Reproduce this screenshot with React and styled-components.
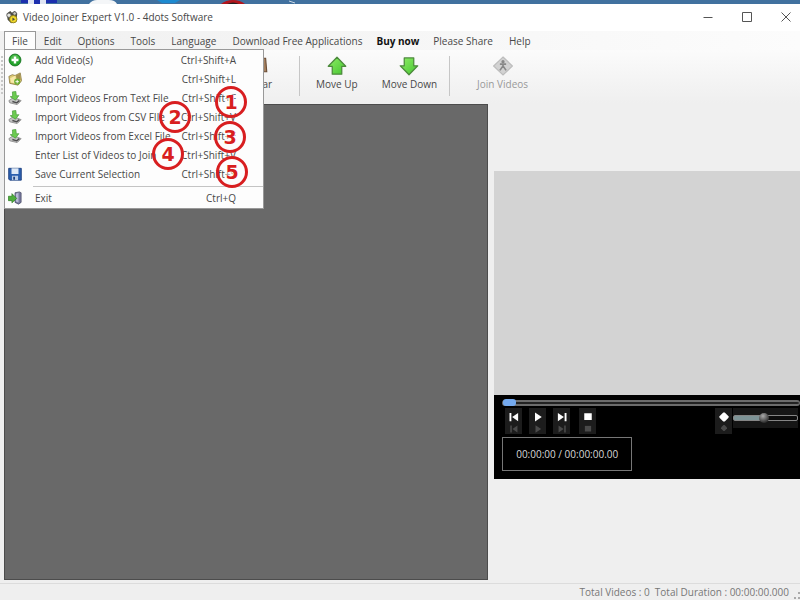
import React, { useState } from 'react';
import styled, { createGlobalStyle, css } from 'styled-components';

const MENUS = ['File', 'Edit', 'Options', 'Tools', 'Language', 'Download Free Applications', 'Buy now', 'Please Share', 'Help'];

const FILE_ITEMS = [
  { label: 'Add Video(s)', keys: 'Ctrl+Shift+A', icon: 'add' },
  { label: 'Add Folder', keys: 'Ctrl+Shift+L', icon: 'folder' },
  { label: 'Import Videos From Text File', keys: 'Ctrl+Shift+F', icon: 'import' },
  { label: 'Import Videos from CSV FIle', keys: 'Ctrl+Shift+V', icon: 'import' },
  { label: 'Import Videos from Excel File', keys: 'Ctrl+Shift+E', icon: 'import' },
  { label: 'Enter List of Videos to Join', keys: 'Ctrl+Shift+V' },
  { label: 'Save Current Selection', keys: 'Ctrl+Shift+S', icon: 'save' },
];

// callout centres, measured from the corner of the file menu
const CALLOUTS = [
  { n: 1, x: 226, y: 52 },
  { n: 2, x: 170, y: 67 },
  { n: 3, x: 225, y: 87 },
  { n: 4, x: 163, y: 104 },
  { n: 5, x: 227, y: 122 },
];

const icons = {
  add: (
    <>
      <circle cx="8" cy="8" r="6.8" fill="#23a32c" stroke="#12701b" />
      <path d="M3 7a5 5 0 0 1 10 0z" fill="#6ccb62" opacity=".6" />
      <path d="M8 4v8M4 8h8" stroke="#fff" strokeWidth="2.8" />
    </>
  ),
  folder: (
    <>
      <path d="M1 5l4-2 3 1 6-3 1.500 9-4 5-9.500-2z" fill="#dcc871" stroke="#7d6c34" strokeWidth=".8" />
      <path d="M2.500 7l6-3 1 9-6-1z" fill="#f7e9a9" />
      <path d="M9 4l4.500-2 1 7-4 2z" fill="#a3924c" />
      <circle cx="10.500" cy="11" r="3.500" fill="#6fae35" />
      <path d="M10.500 9v4M8.500 11h4" stroke="#fff" />
    </>
  ),
  import: (
    <>
      <path d="M1 11l5-3.500L15 11l-4.500 4.500L2 13.500z" fill="#c2c2c2" stroke="#777" strokeWidth=".8" />
      <path d="M5 12l5 1.500 3-2.500" fill="none" stroke="#4d4d4d" strokeWidth="1.500" />
      <path d="M5 1l4-.5.500 5 3-.2L8.500 10.500 2.500 6.500l2.800-.4z" fill="#6ccb50" stroke="#3f9430" strokeWidth=".7" />
    </>
  ),
  save: (
    <>
      <path d="M.8 1.500h14.400v13.500H2L.8 13.800z" fill="#2b5fae" stroke="#1d3f7e" />
      <path d="M4 1.500h8v6.500H4z" fill="#dfe9f6" />
      <path d="M4.500 10h7v5h-7z" fill="#b8cbe6" />
      <path d="M6 11h2v3.500H6z" fill="#1d3f7e" />
    </>
  ),
  exit: (
    <>
      <path d="M8 2l5-1 2 1v11l-3 2-4-2z" fill="#77799e" stroke="#44465f" strokeWidth=".8" />
      <path d="M9 3l3-1v11l-3-1z" fill="#b9bbd6" />
      <path d="M.5 6h4V3L10 8.500 4.500 13.500V11h-4z" fill="#4fae3c" stroke="#2c7a22" strokeWidth=".8" />
    </>
  ),
  app: (
    <>
      <path d="M2 4l4-3 2 2 3-2 3 3-1 9-6 2-4-4z" fill="#4a4a42" />
      <circle cx="4.500" cy="6" r="2.500" fill="#e6e6e0" stroke="#555" />
      <circle cx="11" cy="4" r="2" fill="#c9c9bd" stroke="#555" />
      <circle cx="9.500" cy="10.500" r="4.200" fill="#f0d92c" stroke="#8c7c16" />
      <path d="M8.500 8.500l3 2-3 2z" fill="#4a4a42" />
    </>
  ),
  clear: (
    <>
      <path d="M3 2h10l1 12H2z" fill="#a4805f" stroke="#6b4d36" />
      <path d="M5 4v8M8 4v8" stroke="#d3b494" />
    </>
  ),
  up: <path d="M8 1L15 8.200H11.800v6.300H4.200V8.200H1z" fill="url(#green)" stroke="#4c8a3c" strokeWidth="1" strokeLinejoin="round" />,
  down: <path d="M8 15L1 7.800h3.200V1.500h7.600v6.300H15z" fill="url(#green)" stroke="#4c8a3c" strokeWidth="1" strokeLinejoin="round" />,
  join: (
    <>
      <path d="M8 .8L15.500 8 8 15.200.5 8z" fill="#d2d2d2" stroke="#bdbdbd" />
      <circle cx="8" cy="4.500" r="1.300" fill="#888" />
      <path d="M5.500 6.500h5M8 6v2.500M8 8l-2.500 3.500M8 8l2.500 3.500" fill="none" stroke="#888" strokeWidth="1.300" />
    </>
  ),
  prev: <path d="M2 2.500h2.500v11H2zM13.500 2.500v11L5.500 8z" fill="#fff" />,
  play: <path d="M4 2l9 6-9 6z" fill="#fff" />,
  next: <path d="M11.500 2.500H14v11h-2.500zM2.500 2.500v11l8-5.500z" fill="#fff" />,
  stop: <path d="M3 3h10v9H3z" fill="#fff" />,
  volume: <path d="M7 2h2l5 5v2l-5 5H7L2 9V7z" fill="#fff" />,
  minimize: <path d="M3.500 8.500h9" stroke="#555" />,
  maximize: <path d="M3.500 3.500h9v9h-9z" fill="none" stroke="#555" />,
  close: <path d="M3.500 3.500l9 9M12.500 3.500l-9 9" stroke="#555" />,
};

const Icon = ({ name, size = 16 }) => (
  <svg width={size} height={size} viewBox="0 0 16 16" aria-hidden="true">
    <defs>
      <linearGradient id="green" x1="0" y1="0" x2="1" y2="1">
        <stop offset="0" stopColor="#8fee66" />
        <stop offset="1" stopColor="#45c430" />
      </linearGradient>
    </defs>
    {icons[name]}
  </svg>
);

const App = () => {
  const [position, setPosition] = useState(0);
  const [volume, setVolume] = useState(48);

  return (
    <Page>
      <GlobalStyle />
      <Desktop viewBox="0 0 800 4" preserveAspectRatio="xMinYMin slice" aria-hidden="true">
        <path d="M0 0h800v4H0z" fill="#41719f" />
        <path d="M21 0h7v3h-7zM34 0h6v4h-6zM46 0h11v3H46z" fill="#1c2fae" />
        <path d="M28 0h6v4h-6zM40 0h6v4h-6z" fill="#dfe4f2" />
        <path d="M89 4q3-4 8-4h12q6 0 8 4z" fill="#f4f6f8" />
        <path d="M157 0h23l-5 3h-13z" fill="#1d8ad0" />
        <path d="M221 4q5-4 12-4t12 4z" fill="#b3151c" />
        <path d="M227 4q6-3 12 0z" fill="#222" />
        <path d="M289 1l6 2" stroke="#c9d6e4" />
      </Desktop>
      <Window>
        <TitleBar>
          <Icon name="app" size={14} />
          <Title>Video Joiner Expert V1.0 - 4dots Software</Title>
          <WindowButton aria-label="Minimize"><Icon name="minimize" /></WindowButton>
          <WindowButton aria-label="Maximize"><Icon name="maximize" /></WindowButton>
          <WindowButton aria-label="Close"><Icon name="close" /></WindowButton>
        </TitleBar>

        <MenuBar>
          {MENUS.map((menu) => (
            <MenuButton key={menu} $open={menu === 'File'} $bold={menu === 'Buy now'}>{menu}</MenuButton>
          ))}
          <DropDown>
            {FILE_ITEMS.map((item) => (
              <MenuItem key={item.label}>
                <IconSlot>{item.icon && <Icon name={item.icon} size={14} />}</IconSlot>
                <span>{item.label}</span>
                <Keys>{item.keys}</Keys>
              </MenuItem>
            ))}
            <MenuRule />
            <MenuItem>
              <IconSlot><Icon name="exit" size={14} /></IconSlot>
              <span>Exit</span>
              <Keys>Ctrl+Q</Keys>
            </MenuItem>
            {CALLOUTS.map(({ n, x, y }) => (
              <Callout key={n} style={{ left: x, top: y }}>{n}</Callout>
            ))}
          </DropDown>
        </MenuBar>

        <ToolBar>
          <Grip />
          <ToolButton><Icon name="clear" size={18} />Clear</ToolButton>
          <ToolRule />
          <ToolButton><Icon name="up" size={20} />Move Up</ToolButton>
          <ToolButton><Icon name="down" size={20} />Move Down</ToolButton>
          <ToolRule />
          <ToolButton $wide disabled><Icon name="join" size={20} />Join Videos</ToolButton>
        </ToolBar>

        <Main>
          <FileList />
          <Side>
            <Preview />
            <Player>
              <Seek
                type="range"
                aria-label="Position"
                value={position}
                onChange={(e) => setPosition(Number(e.target.value))}
              />
              <Controls>
                {['prev', 'play', 'next', 'stop'].map((name) => (
                  <PlayerButton key={name} aria-label={name}>
                    <Icon name={name} size={12} />
                    <Reflection><Icon name={name} size={10} /></Reflection>
                  </PlayerButton>
                ))}
                <VolumeGroup>
                  <PlayerButton aria-label="Mute">
                    <Icon name="volume" size={12} />
                    <Reflection><Icon name="volume" size={8} /></Reflection>
                  </PlayerButton>
                  <Volume
                    type="range"
                    aria-label="Volume"
                    value={volume}
                    onChange={(e) => setVolume(Number(e.target.value))}
                    style={{ '--level': `${volume}%` }}
                  />
                </VolumeGroup>
              </Controls>
              <Timer>00:00:00 / 00:00:00.00</Timer>
            </Player>
          </Side>
        </Main>

        <StatusBar>
          <span>Total Videos : 0</span>
          <span>Total Duration : 00:00:00.000</span>
          <SizeGrip width="6" height="8" aria-hidden="true">
            <path d="M4 0h2v2H4zM0 5h2v2H0zM4 5h2v2H4z" fill="#aaa" />
          </SizeGrip>
        </StatusBar>
      </Window>
    </Page>
  );
}

export default App;

const GlobalStyle = createGlobalStyle`
  * {
    box-sizing: border-box;
  }
  body {
    margin: 0;
    font-family: "Open Sans", "Noto Sans", sans-serif;
    font-size: 10px;
    line-height: 14px;
    color: #484848;
  }
  button {
    margin: 0;
    padding: 0;
    border: 0;
    background: none;
    font: inherit;
    color: inherit;
  }
  svg {
    display: block;
    flex: none;
  }
`;

const Page = styled.div`
  min-height: 100vh;
  display: flex;
  flex-direction: column;
  overflow: hidden;
`;

const Desktop = styled.svg`
  width: 100%;
  height: 4px;
`;

const Window = styled.div`
  flex: 1;
  display: flex;
  flex-direction: column;
  background-color: #efefef;
`;

const TitleBar = styled.header`
  display: flex;
  align-items: center;
  height: 27px;
  padding: 0 0 2px 5px;
  background-color: #fff;
`;

const Title = styled.h1`
  flex: 1;
  margin: 0 0 0 4px;
  font-size: 10px;
  font-weight: normal;
`;

const WindowButton = styled.button`
  display: flex;
  justify-content: center;
  width: 39px;
  &:last-child {
    width: 34px;
    padding-left: 6px;
  }
`;

const MenuBar = styled.nav`
  position: relative;
  display: flex;
  height: 19px;
  padding-left: 4px;
  background: linear-gradient(to right, #f0f0f0, #fcfcfc);
`;

const MenuButton = styled.button`
  padding: 0 8px;
  white-space: nowrap;
  ${(props) => props.$bold && css`
    padding: 0 6px;
    font-weight: bold;
    color: #111;
  `}
  ${(props) => props.$open && css`
    padding: 0 7px;
    border: 1px solid #999;
    border-bottom: 0;
    background-color: #fdfdfd;
  `}
`;

const DropDown = styled.div`
  position: absolute;
  z-index: 1;
  top: 18px;
  left: 4px;
  width: 260px;
  padding-bottom: 1px;
  border: 1px solid #999;
  background-color: #fdfdfd;
`;

const MenuItem = styled.button`
  display: flex;
  align-items: center;
  width: 100%;
  height: 19px;
  padding-right: 27px;
  white-space: nowrap;
`;

const IconSlot = styled.span`
  width: 30px;
  padding-left: 3px;
`;

const Keys = styled.span`
  margin-left: auto;
`;

const MenuRule = styled.hr`
  height: 1px;
  margin: 3px 0 1px 28px;
  border: 0;
  background-color: #c4c4c4;
`;

const Callout = styled.span`
  position: absolute;
  display: flex;
  align-items: center;
  justify-content: center;
  width: 32px;
  height: 32px;
  border: 3px solid #d81e20;
  border-radius: 50%;
  transform: translate(-50%, -50%);
  font-family: "DejaVu Sans", sans-serif;
  font-size: 19px;
  font-weight: bold;
  color: #d81e20;
  text-shadow: 0 0 2px #fff, 0 0 2px #fff, 0 0 3px #fff;
`;

const ToolBar = styled.div`
  display: flex;
  height: 53px;
  padding-top: 6px;
  background: linear-gradient(#fbfbfb, #efefef);
`;

const Grip = styled.div`
  width: 2px;
  height: 40px;
  margin: 0 233px 0 1px;
  background: repeating-linear-gradient(#c8c8c8 0 2px, transparent 2px 4px);
`;

const ToolButton = styled.button`
  display: flex;
  flex-direction: column;
  align-items: center;
  justify-content: space-between;
  height: 35px;
  padding: 0 ${(props) => (props.$wide ? 23 : 12)}px;
  white-space: nowrap;
  &:disabled {
    color: #999;
  }
`;

const ToolRule = styled.div`
  width: 1px;
  height: 40px;
  margin: 0 4px 0 0;
  background-color: #c6c6c6;
  &:nth-of-type(2) {
    margin-left: 15px;
  }
`;

const Main = styled.main`
  flex: 1;
  display: grid;
  grid-template-columns: 19fr 12fr;
  gap: 6px;
  padding: 1px 0 3px 4px;
`;

const FileList = styled.section`
  border: 1px solid #4c4c4c;
  background-color: #696969;
`;

const Side = styled.aside`
  padding-top: 67px;
`;

const Preview = styled.div`
  aspect-ratio: 15 / 11;
  background-color: #d3d3d3;
`;

const Player = styled.div`
  height: 84px;
  padding: 4px 0 0 8px;
  background-color: #000;
`;

const Seek = styled.input`
  appearance: none;
  display: block;
  width: 100%;
  height: 8px;
  margin: 0;
  background: none;
  &::-webkit-slider-runnable-track {
    height: 6px;
    border: solid #6c6c6c;
    border-width: 2px 1px;
    border-radius: 3px;
    background-color: #222;
  }
  &::-webkit-slider-thumb {
    appearance: none;
    width: 13px;
    height: 7px;
    margin-top: -3px;
    border-radius: 3px;
    background-color: #74a9ee;
  }
`;

const Controls = styled.div`
  display: flex;
  gap: 7px;
  padding: 1px 2px 0 3px;
`;

const PlayerButton = styled.button`
  display: flex;
  flex-direction: column;
  align-items: center;
  width: 17px;
  height: 26px;
  padding-top: 3px;
  background-color: #1c1c1c;
  &:nth-child(4) {
    margin-left: 2px;
  }
`;

const Reflection = styled.span`
  margin-top: 1px;
  opacity: 0.2;
`;

const VolumeGroup = styled.div`
  display: flex;
  gap: 1px;
  margin-left: auto;
`;

const Volume = styled.input`
  appearance: none;
  width: 65px;
  height: 20px;
  margin: 0;
  background-color: #161616;
  &::-webkit-slider-runnable-track {
    height: 6px;
    border: 1px solid #858585;
    border-radius: 2px;
    background: linear-gradient(to right, #7d9396 var(--level), #0c0c0c var(--level));
  }
  &::-webkit-slider-thumb {
    appearance: none;
    width: 10px;
    height: 10px;
    margin-top: -3px;
    border-radius: 50%;
    background: radial-gradient(circle at 40% 30%, #aaa, #333 70%);
  }
`;

const Timer = styled.output`
  display: block;
  width: max-content;
  margin-top: 3px;
  padding: 9px 13px;
  border: 1px solid #777;
  color: #d8d8d8;
`;

const StatusBar = styled.footer`
  display: flex;
  justify-content: flex-end;
  gap: 5px;
  height: 17px;
  padding-top: 1px;
  border-top: 1px solid #dcdcdc;
  color: #777;
`;

const SizeGrip = styled.svg`
  align-self: flex-end;
`;
